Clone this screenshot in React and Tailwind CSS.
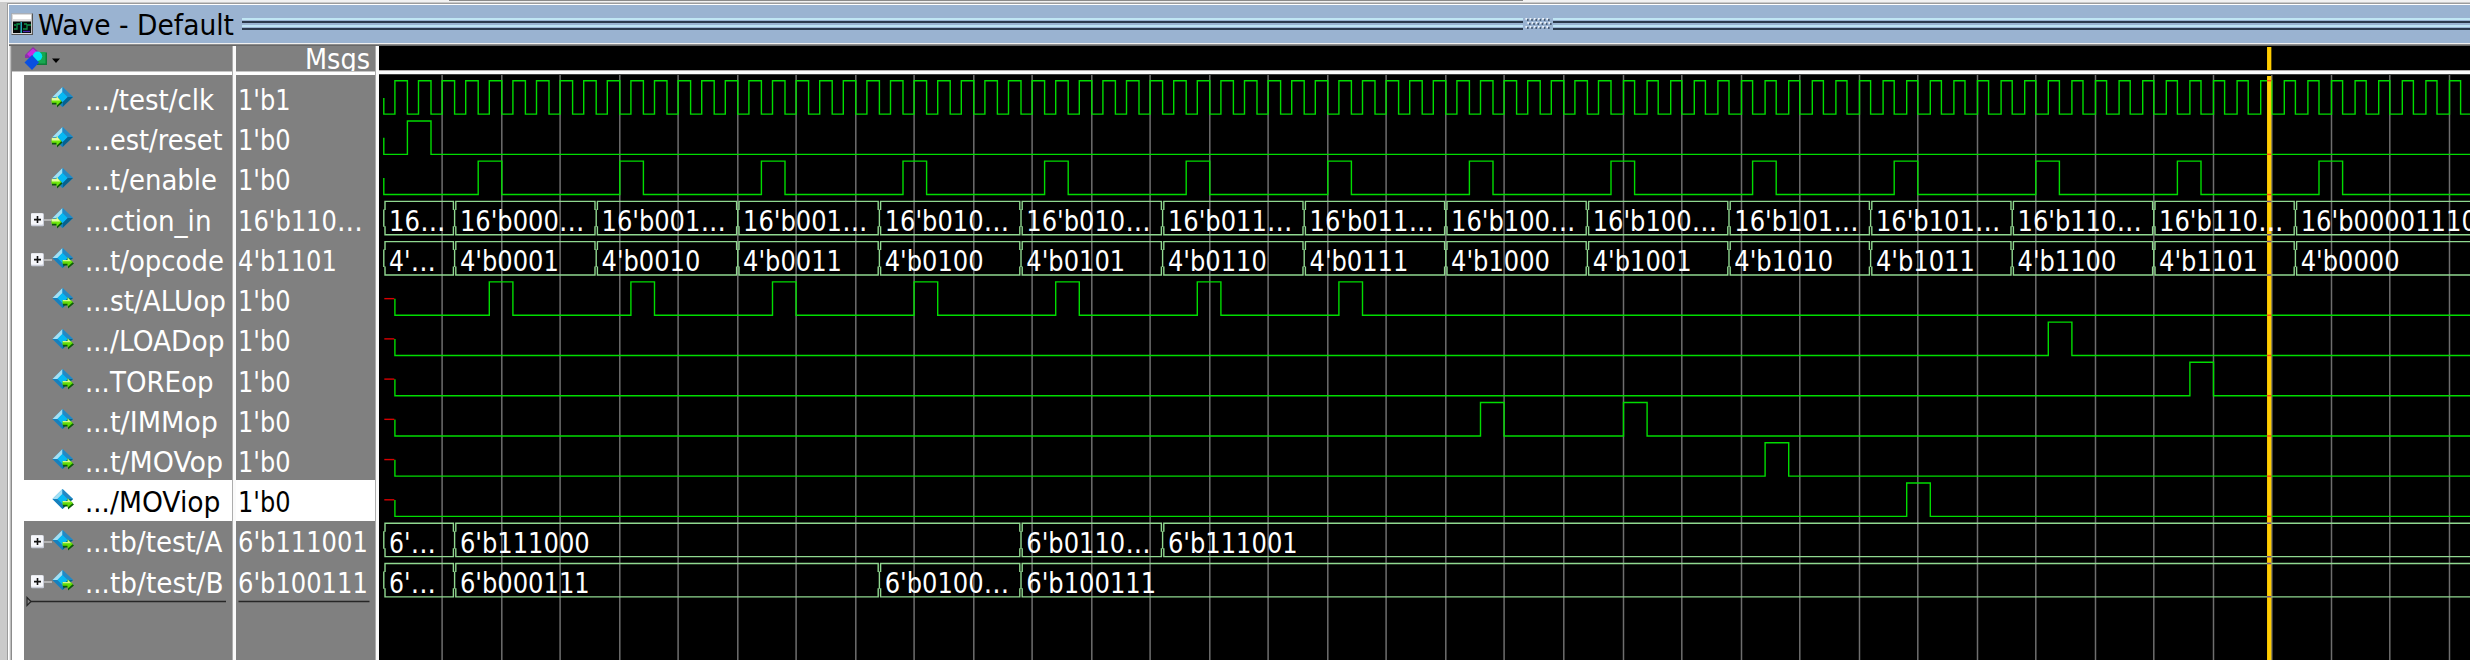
import { useLayoutEffect, useRef } from "react";

const FONT = "font-['DejaVu_Sans_Condensed','DejaVu_Sans',sans-serif] [font-stretch:condensed] text-[28.3px] leading-none whitespace-pre";

const SIGNALS = [
  { name: "/test/clk", w: 104, value: "1'b1", port: "in" },
  { name: "est/reset", w: 112.5, value: "1'b0", port: "in" },
  { name: "t/enable", w: 107, value: "1'b0", port: "in" },
  { name: "ction_in", w: 101.5, value: "16'b110...", port: "in", bus: true },
  { name: "t/opcode", w: 114, value: "4'b1101", port: "out", bus: true },
  { name: "st/ALUop", w: 116, value: "1'b0", port: "out" },
  { name: "/LOADop", w: 114.5, value: "1'b0", port: "out" },
  { name: "TOREop", w: 103.5, value: "1'b0", port: "out" },
  { name: "t/IMMop", w: 108, value: "1'b0", port: "out" },
  { name: "t/MOVop", w: 113, value: "1'b0", port: "out" },
  { name: "/MOViop", w: 110.5, value: "1'b0", port: "out", selected: true },
  { name: "tb/test/A", w: 112.5, value: "6'b111001", port: "out", bus: true },
  { name: "tb/test/B", w: 113.5, value: "6'b100111", port: "out", bus: true },
];

const ADVANCE = { "'": 0.211, b: 0.553, ".": 0.303 };
const literalWidth = (s) => [...s].reduce((sum, c) => sum + (ADVANCE[c] ?? 0.546) * 28.3, 0);

/* Text squeezed or stretched horizontally to an exact width. */
function Fit({ text, width }) {
  const ref = useRef(null);
  useLayoutEffect(() => {
    const el = ref.current;
    el.style.transform = "none";
    el.style.transform = `scaleX(${width / el.getBoundingClientRect().width})`;
  }, [text, width]);
  return (
    <span className="block shrink-0" style={{ width }}>
      <span ref={ref} className="inline-block origin-left">{text}</span>
    </span>
  );
}

function Value({ text }) {
  const m = text.match(/^(.*?)(\.\.\.)?$/);
  return (
    <span className="flex">
      <Fit text={m[1]} width={literalWidth(m[1])} />
      {m[2] && <Fit text="..." width={literalWidth("...")} />}
    </span>
  );
}

function PortIcon({ port }) {
  return (
    <svg className="block h-[23px] w-[23px] shrink-0" viewBox="0 0 23 23">
      <path d="M11.5 1L22 11 11.5 21 1.5 11z" fill="#1597d4" />
      <path d="M11.5 1L1.5 11h5l5-5z" fill="#a4e0f4" />
      <path d="M11.5 1L22 11h-5.5l-5-5z" fill="#2388c4" />
      <path d="M22 11L11.5 21v-5l5-5z" fill="#06618f" />
      <path d="M1.5 11L11.5 21v-5l-5-5z" fill="#1780bd" />
      <path d="M11.5 6l5 5-5 5-5-5z" fill="#06b9f4" />
      {port === "in" ? (
        <g>
          <path d="M1 14.5h5v-3.500l5.500 5.500-5.500 5v-3H1z" fill="#0b5a08" />
          <path d="M.5 12.800h5V10.300l5 4.700-5 4.700v-2.900h-5z" fill="#6fe80a" />
          <path d="M.8 11.800h5v-1.600l3.600 4.200H.8z" fill="#e3fba0" />
        </g>
      ) : (
        <g>
          <path d="M12 14.500h5v-3.500l6 5.500-6 5v-3h-5z" fill="#0b5a08" />
          <path d="M11.500 13h5V10.300l5.500 4.700-5.500 4.700v-2.900h-5z" fill="#62dc08" />
          <path d="M11.800 13h5v-2.200l3.400 3.400h-8.400z" fill="#d5f78c" />
        </g>
      )}
    </svg>
  );
}

function PlusBox() {
  return (
    <svg className="block h-[16px] w-[22px] shrink-0" viewBox="0 0 22 16">
      <path d="M14 8h8" stroke="#d0d0d0" strokeWidth="1.3" />
      <rect x="1" y="1.2" width="13" height="13" rx="1.2" fill="#c9cdd8" />
      <rect x="1" y="1.2" width="12" height="11.6" rx="1" fill="#f6f7fb" />
      <path d="M4 7.6h7M7.5 4.1v7" stroke="#111" strokeWidth="1.6" />
    </svg>
  );
}

function NamesPane() {
  return (
    <div className="flex w-[220px] shrink-0 flex-col overflow-hidden">
      <div className="flex h-[25px] shrink-0 bg-[#808080] pl-3">
        <svg className="block h-[25px] w-[40px]" viewBox="0 0 40 25">
          <path d="M1 9L9 1l7 6-5 5H1z" fill="#8c2fa8" />
          <path d="M3 8l6-5.500 6 5.500-4 3-2-2-3 2z" fill="#c72de0" />
          <rect x="13" y="6.500" width="10" height="12.500" fill="#0e7d38" />
          <rect x="13" y="6" width="8.500" height="11.500" fill="#18a850" />
          <circle cx="13.500" cy="10.300" r="4.700" fill="#00e5f8" />
          <path d="M8 9l7 7.500L8 24l-7.500-7.500z" fill="#0a50e0" />
          <path d="M28 12.500h8l-4 4.500z" fill="#000" />
        </svg>
      </div>
      <div className="h-[4px] shrink-0 border-t border-[#c4c4c4] bg-white" />
      <div className="flex min-h-0 flex-1">
        <div className="w-[11.5px] shrink-0 bg-white" />
        <div className={`flex-1 bg-[#808080] pt-[3.2px] ${FONT}`}>
          {SIGNALS.map((s) => (
            <div
              key={s.name}
              className={`flex h-[40.23px] items-start pl-[6px] ${s.selected ? "bg-white text-black" : "text-white"}`}
            >
              <div className="flex w-[21px] shrink-0 pt-[13px]">{s.bus && <PlusBox />}</div>
              <div className="w-[34.7px] shrink-0 pt-[8px]"><PortIcon port={s.port} /></div>
              <div className="flex pt-[8.8px]">
                <Fit text="..." width={24.6} />
                <Fit text={s.name} width={s.w} />
              </div>
            </div>
          ))}
          <svg className="mt-[-5px] block h-[12px] w-[208px]" viewBox="0 0 208 12">
            <path d="M6 5.500h196" stroke="#262626" strokeWidth="1.700" />
            <path d="M3 1.500L7 5.500 3 9.500z" fill="#808080" stroke="#262626" strokeWidth="1.200" />
          </svg>
        </div>
      </div>
    </div>
  );
}

function ValuesPane() {
  return (
    <div className={`flex w-[139px] shrink-0 flex-col overflow-hidden text-white ${FONT}`}>
      <div className="flex h-[25px] shrink-0 justify-end overflow-hidden bg-[#808080] pr-[5px]">
        <div className="mt-[0.3px]"><Fit text="Msgs" width={65} /></div>
      </div>
      <div className="h-[4px] shrink-0 border-t border-[#c4c4c4] bg-white" />
      <div className="flex-1 bg-[#808080] pt-[3.2px]">
        {SIGNALS.map((s) => (
          <div
            key={s.name}
            className={`h-[40.23px] pl-[2px] pt-[8.8px] ${s.selected ? "bg-white text-black" : ""}`}
          >
            <Value text={s.value} />
          </div>
        ))}
        <svg className="mt-[-5px] block h-[12px] w-[139px]" viewBox="0 0 139 12">
          <path d="M2.500 5.500h131" stroke="#262626" strokeWidth="1.700" />
        </svg>
      </div>
    </div>
  );
}

/* The drawing's user space is the window's: x of half-clock edge j, y of row i. */
const LEFT = 379;
const TOP = 46;
const END = 2480;
const edge = (j) => {
  const x = 383.8 + 11.8 * j;
  return j % 2 ? x + (x < 1610 ? -0.7 : 0.7) : x;
};
const hi = (i) => 80.7 + 40.23 * i;
const lo = (i) => 114.1 + 40.23 * i;
const range = (n) => Array.from({ length: n }, (_, i) => i);

const clockPath = () =>
  `M${edge(0)} ${lo(0) - 16}V${lo(0)}` +
  range(89).map((k) => `H${edge(2 * k + 1)}V${hi(0)}H${edge(2 * k + 2)}V${lo(0)}`).join("");

function pulsePath(row, starts, unknown) {
  const first = unknown ? edge(1) : edge(0);
  let d = `M${first} ${lo(row) - 16.5}V${lo(row)}`;
  starts.forEach((j) => {
    d += `H${edge(j)}V${hi(row)}H${edge(j + 2)}V${lo(row)}`;
  });
  return d + `H${END}`;
}

const PULSES = [
  { row: 1, starts: [2] },
  { row: 2, starts: range(14).map((k) => 8 + 12 * k) },
  { row: 5, starts: range(7).map((k) => 9 + 12 * k), unknown: true },
  { row: 6, starts: [141], unknown: true },
  { row: 7, starts: [153], unknown: true },
  { row: 8, starts: [93, 105], unknown: true },
  { row: 9, starts: [117], unknown: true },
  { row: 10, starts: [129], unknown: true },
];

const steps = range(14).map((k) => 6 + 12 * k);
const BUSES = [
  {
    row: 3,
    at: [0, ...steps],
    text: ["16...", "16'b000...", "16'b001...", "16'b001...", "16'b010...", "16'b010...", "16'b011...", "16'b011...",
      "16'b100...", "16'b100...", "16'b101...", "16'b101...", "16'b110...", "16'b110...", "16'b00001110"],
  },
  {
    row: 4,
    at: [0, ...steps],
    text: ["4'...", "4'b0001", "4'b0010", "4'b0011", "4'b0100", "4'b0101", "4'b0110", "4'b0111",
      "4'b1000", "4'b1001", "4'b1010", "4'b1011", "4'b1100", "4'b1101", "4'b0000"],
  },
  { row: 11, at: [0, 6, 54, 66], text: ["6'...", "6'b111000", "6'b0110...", "6'b111001"] },
  { row: 12, at: [0, 6, 42, 54], text: ["6'...", "6'b000111", "6'b0100...", "6'b100111"] },
];

function busPath({ row, at }) {
  const t = hi(row);
  const b = lo(row);
  return at
    .map((j, k) => {
      const x = edge(j);
      const next = k + 1 < at.length ? edge(at[k + 1]) : END;
      return (
        `M${next - 1.2} ${t + 8.5}V${t}H${x + 1.2}V${t + 8.5}M${x} ${t + 8}V${b - 8}` +
        `M${x + 1.2} ${b - 8.5}V${b}H${next - 1.2}V${b - 8.5}`
      );
    })
    .join("");
}

function BusLabel({ x, y, text }) {
  const m = text.match(/^(.*?)(\.\.\.)?$/);
  const w = literalWidth(m[1]);
  return (
    <>
      <text x={x} y={y} textLength={w} lengthAdjust="spacingAndGlyphs">{m[1]}</text>
      {m[2] && <text x={x + w + 0.3} y={y} textLength={25.2} lengthAdjust="spacingAndGlyphs">...</text>}
    </>
  );
}

function WavePane() {
  return (
    <svg className="block h-[614px] w-[2091px] shrink-0 bg-black" viewBox={`${LEFT} ${TOP} 2091 614`}>
      <g stroke="#6e6e6e" strokeWidth="1.5">
        {range(35).map((k) => (
          <path key={k} d={`M${edge(5 * (k + 1))} 75V660`} />
        ))}
      </g>
      <g fill="none" stroke="#00dc00" strokeWidth="1.4">
        <path d={clockPath()} />
        {PULSES.map((p) => (
          <path key={p.row} d={pulsePath(p.row, p.starts, p.unknown)} />
        ))}
      </g>
      <g stroke="#d80000" strokeWidth="1.4">
        {PULSES.filter((p) => p.unknown).map((p) => (
          <path key={p.row} d={`M384.300 ${lo(p.row) - 16.6}H394.300`} />
        ))}
      </g>
      <g fill="none" stroke="#90d890" strokeWidth="1.4">
        {BUSES.map((b) => (
          <path key={b.row} d={busPath(b)} />
        ))}
      </g>
      <path d="M379 72.500H2470" stroke="#fafafa" strokeWidth="3.500" />
      <path d="M379 70.500H2470" stroke="#b4b0b0" />
      <path d="M2269.200 47V70M2269.200 76V660" stroke="#ffcc00" strokeWidth="4.300" />
      <g stroke="#ff4a10" strokeWidth="1.400">
        <path d={`M2267 ${hi(0)}h4.300`} />
        {PULSES.map((p) => (
          <path key={p.row} d={`M2267 ${lo(p.row)}h4.300`} />
        ))}
      </g>
      <g stroke="#7d5a80" strokeWidth="1.500">
        {BUSES.map((b) => (
          <path key={b.row} d={`M2267 ${hi(b.row)}h4.300M2267 ${lo(b.row)}h4.300`} />
        ))}
      </g>
      <g className={FONT} fill="#fff">
        {BUSES.flatMap((b) =>
          b.at.map((j, k) => (
            <BusLabel key={`${b.row}-${k}`} x={edge(j) + 5.3} y={110.4 + 40.23 * b.row} text={b.text[k]} />
          ))
        )}
      </g>
    </svg>
  );
}

function TitleBar() {
  const rule = (
    <>
      <div className="h-[2px] bg-[#c0e6f4]" />
      <div className="mt-px h-[2px] bg-[#2c3a4c]" />
      <div className="mt-[2px] h-[2px] bg-[#bfe4f4]" />
      <div className="mt-px h-[2px] bg-[#2c3a4c]" />
    </>
  );
  return (
    <div className="flex h-[38px] shrink-0 bg-[#9ab3d1]">
      <svg className="ml-[2px] mt-[7.5px] block h-[23px] w-[23px]" viewBox="0 0 23 23">
        <rect x=".5" y=".5" width="21.500" height="21.500" fill="#555" />
        <rect x=".5" y=".5" width="20.300" height="20.500" fill="#dcdcdc" />
        <rect x="2" y="2" width="18" height="4" fill="#fff" />
        <rect x="2" y="8.500" width="18" height="11.500" fill="#050808" />
        <path d="M3 16h3v-5h3M12 16h4v-4h4M3 12h2M13 11h3" stroke="#0c9048" strokeWidth="1.300" fill="none" />
        <path d="M10.200 9v11" stroke="#28c8d8" strokeWidth="1.300" />
        <path d="M12 18.500h7" stroke="#4a28b0" strokeWidth="1.300" />
      </svg>
      <div className={`ml-[4px] mt-[6.600px] w-[203.5px] text-black ${FONT}`}>
        <Fit text="Wave - Default" width={196} />
      </div>
      <div className="mt-[13px] w-[1281px]">{rule}</div>
      <svg className="mt-[12px] block h-[13px] w-[30px]" viewBox="0 0 30 13">
        {[0, 1, 2].map((r) =>
          range(6).map((c) => (
            <g key={`${r}-${c}`}>
              <rect x={2.4 + c * 4.2 + (r === 1 ? 2 : 0)} y={1 + r * 4} width="1.800" height="1.800" fill="#eef4fa" />
              <rect x={4 + c * 4.2 + (r === 1 ? 2 : 0)} y={2.2 + r * 4} width="1.600" height="1.600" fill="#34465c" />
            </g>
          ))
        )}
      </svg>
      <div className="mt-[13px] flex-1">{rule}</div>
    </div>
  );
}

function Splitter() {
  return <div className="w-[4px] shrink-0 border-l border-[#adadad] bg-[#fafafa]" />;
}

export default function App() {
  return (
    <div className="flex h-[660px] w-[2470px] flex-col overflow-hidden bg-[#cacaca]">
      <div className="flex h-[2px] shrink-0 bg-[#f2f2f2]">
        <div className="ml-[449px] h-px w-[1074px] bg-[#8a8a8a]" />
      </div>
      <div className="mt-px flex min-h-0 flex-1">
        <div className="w-[7px] shrink-0" />
        <div className="flex min-w-0 flex-1 flex-col border-l border-t border-[#9c9c9c]">
          <div className="flex flex-1 flex-col border-l-[1.500px] border-t border-white">
            <TitleBar />
            <div className="h-[2px] shrink-0 border-b border-[#8c8c8c] bg-[#f0f0f0]" />
            <div className="h-px shrink-0 bg-[#686868]" />
            <div className="flex h-[614px] shrink-0">
              <div className="w-[3px] shrink-0 border-x border-l-[#e8e8e8] border-r-[#8c8c8c] bg-[#bdbdbd]" />
              <NamesPane />
              <Splitter />
              <ValuesPane />
              <Splitter />
              <WavePane />
            </div>
          </div>
        </div>
      </div>
    </div>
  );
}
